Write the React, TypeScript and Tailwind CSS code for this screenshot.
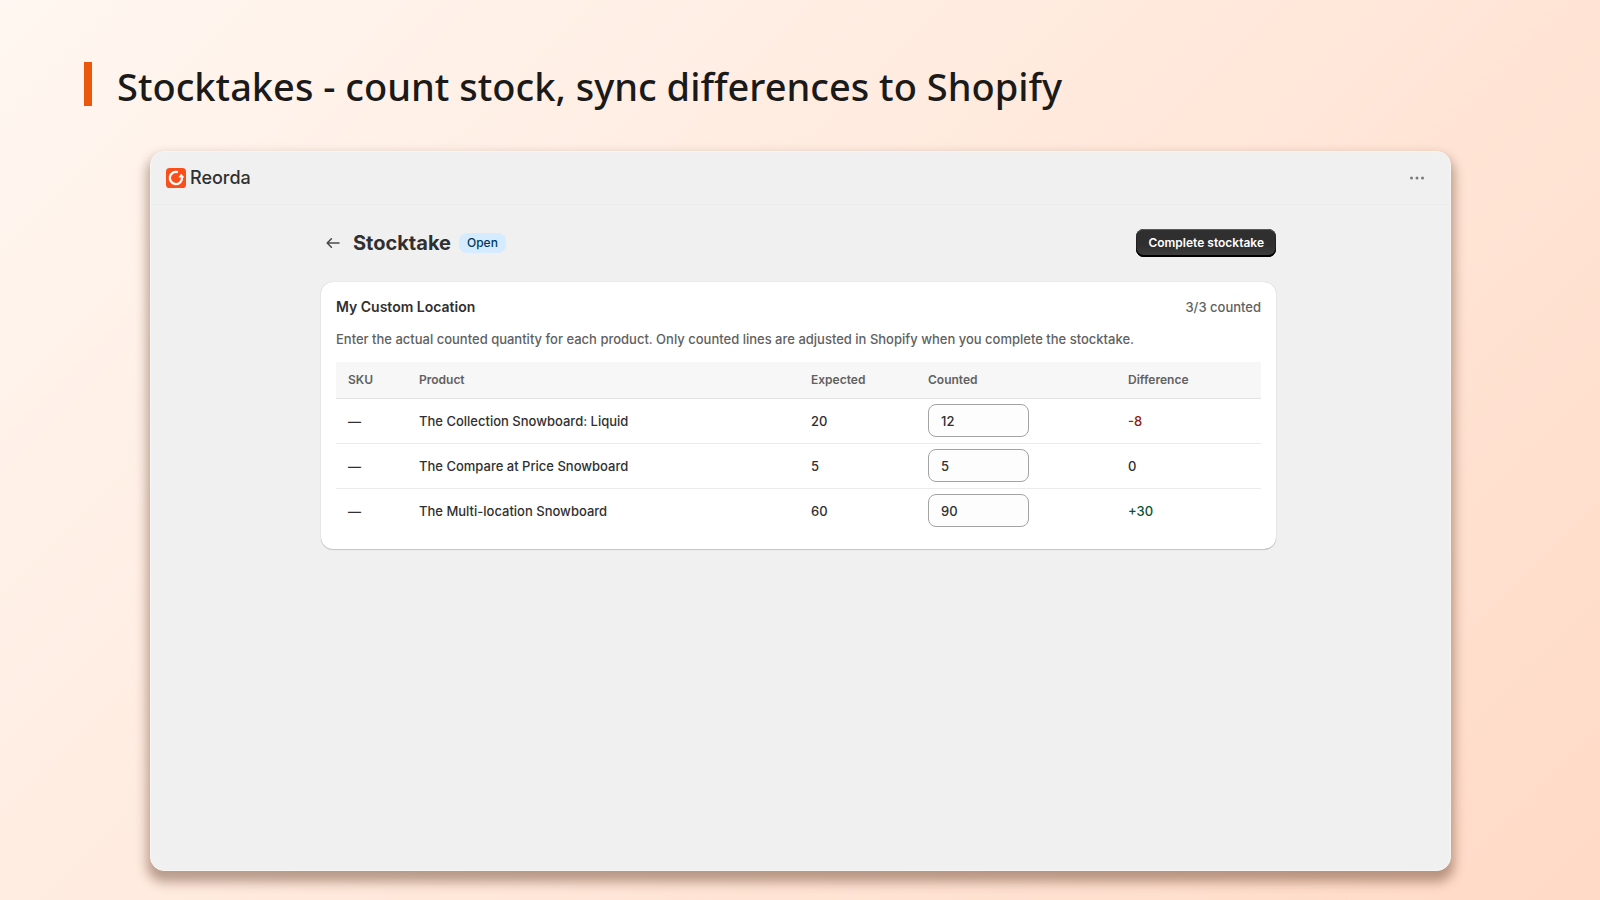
interface StockLine {
  sku: string;
  product: string;
  expected: number;
  counted: number;
}

const lines: StockLine[] = [
  { sku: '—', product: 'The Collection Snowboard: Liquid', expected: 20, counted: 12 },
  { sku: '—', product: 'The Compare at Price Snowboard', expected: 5, counted: 5 },
  { sku: '—', product: 'The Multi-location Snowboard', expected: 60, counted: 90 },
];

function Logo() {
  return (
    <svg viewBox="0 0 20 20" className="w-5 h-5" aria-hidden="true">
      <rect width="20" height="20" rx="3.6" fill="#fa4f1b" />
      <path d="M11.8 4.2A6.1 6.1 0 1 0 16 9.4" fill="none" stroke="#fff" strokeWidth="2.3" />
      <path d="M12.4 9.4 15.2 5.8l3.2 3.6z" fill="#fff" />
    </svg>
  );
}

function BackArrow() {
  return (
    <svg viewBox="0 0 14 12" className="w-[14px] h-3" fill="none" stroke="#4a4a4a" strokeWidth="1.6" strokeLinecap="round" strokeLinejoin="round">
      <path d="M13 6H1.2M5.4 1.8 1.2 6l4.2 4.2" />
    </svg>
  );
}

function Difference({ value }: { value: number }) {
  if (value < 0) return <span className="text-[#8e1f0b]">{value}</span>;
  if (value > 0) return <span className="text-[#0c5132]">+{value}</span>;
  return <span>0</span>;
}

function StocktakeTable() {
  return (
    <table className="w-full table-fixed text-left">
      <colgroup>
        <col className="w-[71px]" />
        <col />
        <col className="w-[117px]" />
        <col className="w-[200px]" />
        <col className="w-[145px]" />
      </colgroup>
      <thead>
        <tr className="h-9 bg-[#f7f7f7] border-b border-[#e3e3e3] text-xs text-[#616161]">
          <th className="px-3 font-semibold">SKU</th>
          <th className="px-3 font-semibold">Product</th>
          <th className="px-3 font-semibold">Expected</th>
          <th className="px-3 font-semibold">Counted</th>
          <th className="px-3 font-semibold">Difference</th>
        </tr>
      </thead>
      <tbody>
        {lines.map((line) => (
          <tr key={line.product} className="h-[45px] border-b border-[#ebebeb] last:border-b-0">
            <td className="px-3">{line.sku}</td>
            <td className="px-3">{line.product}</td>
            <td className="px-3">{line.expected}</td>
            <td className="px-3">
              <input
                type="text"
                inputMode="numeric"
                aria-label={`Counted quantity for ${line.product}`}
                defaultValue={line.counted}
                className="block w-[101px] h-[33px] px-3 rounded-lg border border-[#a3a3a3] bg-[#fdfdfd]"
              />
            </td>
            <td className="px-3">
              <Difference value={line.counted - line.expected} />
            </td>
          </tr>
        ))}
      </tbody>
    </table>
  );
}

export default function App() {
  return (
    <div className="min-h-screen flex flex-col bg-[linear-gradient(135deg,#fff7f1,#ffdac6)] pl-[150px] pr-[149px] pt-[62px] pb-[29px]">
      <header className="flex -ml-[66px] gap-[25px]">
        <div className="w-2 h-11 bg-[#ea580c]" />
        <h1 className="font-['Noto_Sans',sans-serif] text-[38px] leading-[48px] font-medium text-[#1a1a1a]">
          Stocktakes - count stock, sync differences to Shopify
        </h1>
      </header>

      <main className="flex-1 flex flex-col mt-[41px] rounded-[14px] bg-[#f0f0f0] border border-[#f8f6f5] shadow-[0_8px_12px_3px_#4b240c66] font-['Inter',sans-serif] text-[13px] leading-5 font-[450] text-[#303030]">
        <div className="h-[53px] px-[15px] flex items-center justify-between border-b border-[#ebebeb]">
          <div className="flex items-center gap-1">
            <Logo />
            <span className="text-lg font-medium">Reorda</span>
          </div>
          <button type="button" aria-label="More actions" className="p-2 mr-[2px]">
            <svg viewBox="0 0 16 4" className="w-4 h-1" fill="#7a7a7a">
              <circle cx="2.5" cy="2" r="1.5" />
              <circle cx="8" cy="2" r="1.5" />
              <circle cx="13.5" cy="2" r="1.5" />
            </svg>
          </button>
        </div>

        <div className="w-full pr-1">
          <div className="w-full max-w-[955px] mx-auto">
            <div className="flex items-center justify-between pt-6">
              <div className="flex items-center gap-2">
                <button type="button" aria-label="Back" className="px-[5px] py-2">
                  <BackArrow />
                </button>
                <h2 className="text-xl font-bold">Stocktake</h2>
                <span className="px-2 rounded-lg bg-[#d5ebff] text-xs leading-5 font-medium text-[#003a5a]">Open</span>
              </div>
              <button
                type="button"
                className="h-7 px-3 rounded-lg bg-linear-to-b from-[#2f2f2f] from-60% to-[#404040] text-xs font-semibold text-white shadow-[inset_0_-2px_0_#000,inset_0_1px_0_#5a5a5a,inset_0_0_0_1px_#222]"
              >
                Complete stocktake
              </button>
            </div>

            <section className="mt-[25px] px-[15px] pt-[15px] pb-4 rounded-xl bg-white shadow-[0_1px_1px_#0000002b,0_0_1px_#00000040]">
              <div className="flex items-center justify-between">
                <h3 className="text-sm font-semibold">My Custom Location</h3>
                <span className="text-[#616161]">3/3 counted</span>
              </div>
              <p className="mt-3 mb-[13px] text-[#616161]">
                Enter the actual counted quantity for each product. Only counted lines are adjusted in Shopify when you complete the stocktake.
              </p>
              <StocktakeTable />
            </section>
          </div>
        </div>
      </main>
    </div>
  );
}
